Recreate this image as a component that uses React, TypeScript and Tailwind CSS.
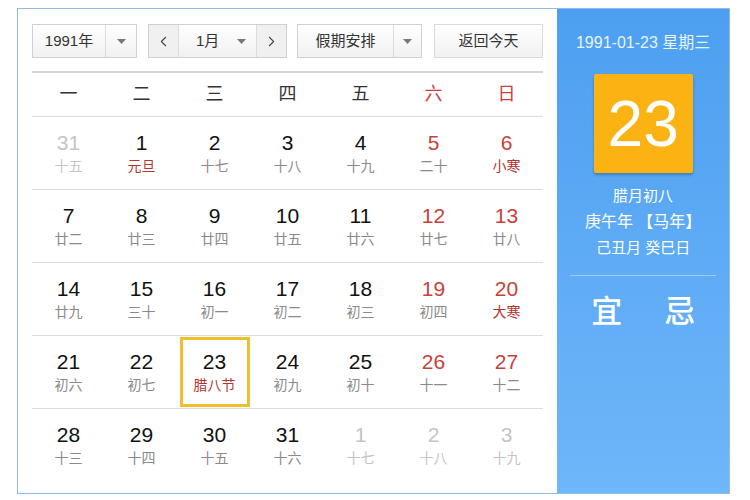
import { ChevronLeft, ChevronRight } from "lucide-react";

type Day = {
  num: number;
  lunar: string;
  other?: boolean;
  weekend?: boolean;
  holiday?: boolean;
  today?: boolean;
};

const WEEKDAYS = ["一", "二", "三", "四", "五", "六", "日"];

const ROWS: Day[][] = [
  [
    { num: 31, lunar: "十五", other: true },
    { num: 1, lunar: "元旦", holiday: true },
    { num: 2, lunar: "十七" },
    { num: 3, lunar: "十八" },
    { num: 4, lunar: "十九" },
    { num: 5, lunar: "二十", weekend: true },
    { num: 6, lunar: "小寒", weekend: true, holiday: true },
  ],
  [
    { num: 7, lunar: "廿二" },
    { num: 8, lunar: "廿三" },
    { num: 9, lunar: "廿四" },
    { num: 10, lunar: "廿五" },
    { num: 11, lunar: "廿六" },
    { num: 12, lunar: "廿七", weekend: true },
    { num: 13, lunar: "廿八", weekend: true },
  ],
  [
    { num: 14, lunar: "廿九" },
    { num: 15, lunar: "三十" },
    { num: 16, lunar: "初一" },
    { num: 17, lunar: "初二" },
    { num: 18, lunar: "初三" },
    { num: 19, lunar: "初四", weekend: true },
    { num: 20, lunar: "大寒", weekend: true, holiday: true },
  ],
  [
    { num: 21, lunar: "初六" },
    { num: 22, lunar: "初七" },
    { num: 23, lunar: "腊八节", holiday: true, today: true },
    { num: 24, lunar: "初九" },
    { num: 25, lunar: "初十" },
    { num: 26, lunar: "十一", weekend: true },
    { num: 27, lunar: "十二", weekend: true },
  ],
  [
    { num: 28, lunar: "十三" },
    { num: 29, lunar: "十四" },
    { num: 30, lunar: "十五" },
    { num: 31, lunar: "十六" },
    { num: 1, lunar: "十七", other: true },
    { num: 2, lunar: "十八", other: true },
    { num: 3, lunar: "十九", other: true },
  ],
];

const FONT = "font-['Liberation_Sans','Noto_Sans_CJK_SC',sans-serif]";

function Caret() {
  return (
    <svg width="9" height="5" viewBox="0 0 9 5" aria-hidden="true">
      <path d="M0 0h9L4.5 5z" fill="#777" />
    </svg>
  );
}

function DayCell({ day }: { day: Day }) {
  const numColor = day.other
    ? "text-[#c4c4c4]"
    : day.weekend
      ? "text-[#c8413a]"
      : "text-[#111]";
  const lunarColor = day.other
    ? "text-[#c4c4c4]"
    : day.holiday
      ? "text-[#b5342e]"
      : "text-[#8a8a8a]";
  return (
    <div className="flex h-[72px] items-center justify-center">
      <div
        className={`flex h-[70px] w-[70px] flex-col items-center justify-center ${
          day.today ? "border-[3px] border-[#f0c02c]" : ""
        }`}
      >
        <span className={`text-[21px] leading-[26px] ${numColor}`}>{day.num}</span>
        <span className={`text-[14px] leading-[20px] ${lunarColor}`}>{day.lunar}</span>
      </div>
    </div>
  );
}

export default function App() {
  return (
    <div className={`h-[500px] w-[750px] bg-white pl-[17px] pt-[8px] ${FONT}`}>
      <div className="flex h-[486px] w-[713px] border border-[#8fbbe6]">
        {/* Calendar */}
        <div className="w-[540px] pl-[14px] pt-[15px]">
          <div className="flex h-[34px] w-[511px] items-stretch text-[15px] text-[#333]">
            <div className="flex w-[105px] border border-[#d0d0d0] bg-gradient-to-b from-white to-[#f1f1f1]">
              <span className="flex w-[72px] items-center justify-center">1991年</span>
              <span className="flex flex-1 items-center justify-center border-l border-[#dcdcdc]">
                <Caret />
              </span>
            </div>
            <div className="ml-[11px] flex w-[139px] border border-[#d0d0d0] bg-gradient-to-b from-white to-[#f1f1f1]">
              <span className="flex w-[30px] items-center justify-center border-r border-[#dcdcdc] bg-[#f0f0f0]">
                <ChevronLeft size={17} strokeWidth={1.5} color="#444" />
              </span>
              <span className="flex flex-1 items-center pl-[17px] pr-[10px]">
                <span className="flex-1">1月</span>
                <Caret />
              </span>
              <span className="flex w-[30px] items-center justify-center border-l border-[#dcdcdc] bg-[#f0f0f0]">
                <ChevronRight size={17} strokeWidth={1.5} color="#444" />
              </span>
            </div>
            <div className="ml-[10px] flex w-[125px] border border-[#d0d0d0] bg-gradient-to-b from-white to-[#f1f1f1]">
              <span className="flex w-[95px] items-center justify-center">假期安排</span>
              <span className="flex flex-1 items-center justify-center border-l border-[#dcdcdc]">
                <Caret />
              </span>
            </div>
            <div className="ml-[12px] flex flex-1 items-center justify-center border border-[#dadada] bg-gradient-to-b from-white to-[#f1f1f1]">
              返回今天
            </div>
          </div>

          <div className="mt-[13px] w-[511px] border-t-2 border-[#d4d4d4]">
            <div className="grid h-[44px] grid-cols-7 border-b border-[#dcdcdc] text-[18px]">
              {WEEKDAYS.map((w, i) => (
                <div
                  key={w}
                  className={`flex items-center justify-center ${
                    i >= 5 ? "text-[#c8413a]" : "text-[#333]"
                  }`}
                >
                  {w}
                </div>
              ))}
            </div>
            {ROWS.map((row, r) => (
              <div
                key={r}
                className={`grid grid-cols-7 ${r < ROWS.length - 1 ? "border-b border-[#dcdcdc]" : ""}`}
              >
                {row.map((d, i) => (
                  <DayCell key={i} day={d} />
                ))}
              </div>
            ))}
          </div>
        </div>

        {/* Side panel */}
        <div className="flex w-[172px] flex-col items-center bg-gradient-to-b from-[#4c9ff0] to-[#6fb6fa] text-white">
          <div className="mt-[24px] text-[16px] leading-[20px] text-[#e8f3ff]">1991-01-23 星期三</div>
          <div className="mt-[21px] flex h-[99px] w-[99px] items-center justify-center rounded-[2px] bg-[#fbb313] text-[64px] leading-none shadow-[0_2px_3px_rgba(0,0,0,0.25)]">
            23
          </div>
          <div className="mt-[10px] text-[15px] leading-[26px]">腊月初八</div>
          <div className="text-[16px] leading-[26px]">庚午年 【马年】</div>
          <div className="text-[15px] leading-[26px]">己丑月 癸巳日</div>
          <div className="mt-[14px] h-[1px] w-[146px] bg-[#9fcdfb]" />
          <div className="mt-[16px] flex w-[104px] justify-between text-[31px] font-medium leading-[40px]">
            <span>宜</span>
            <span>忌</span>
          </div>
        </div>
      </div>
    </div>
  );
}
